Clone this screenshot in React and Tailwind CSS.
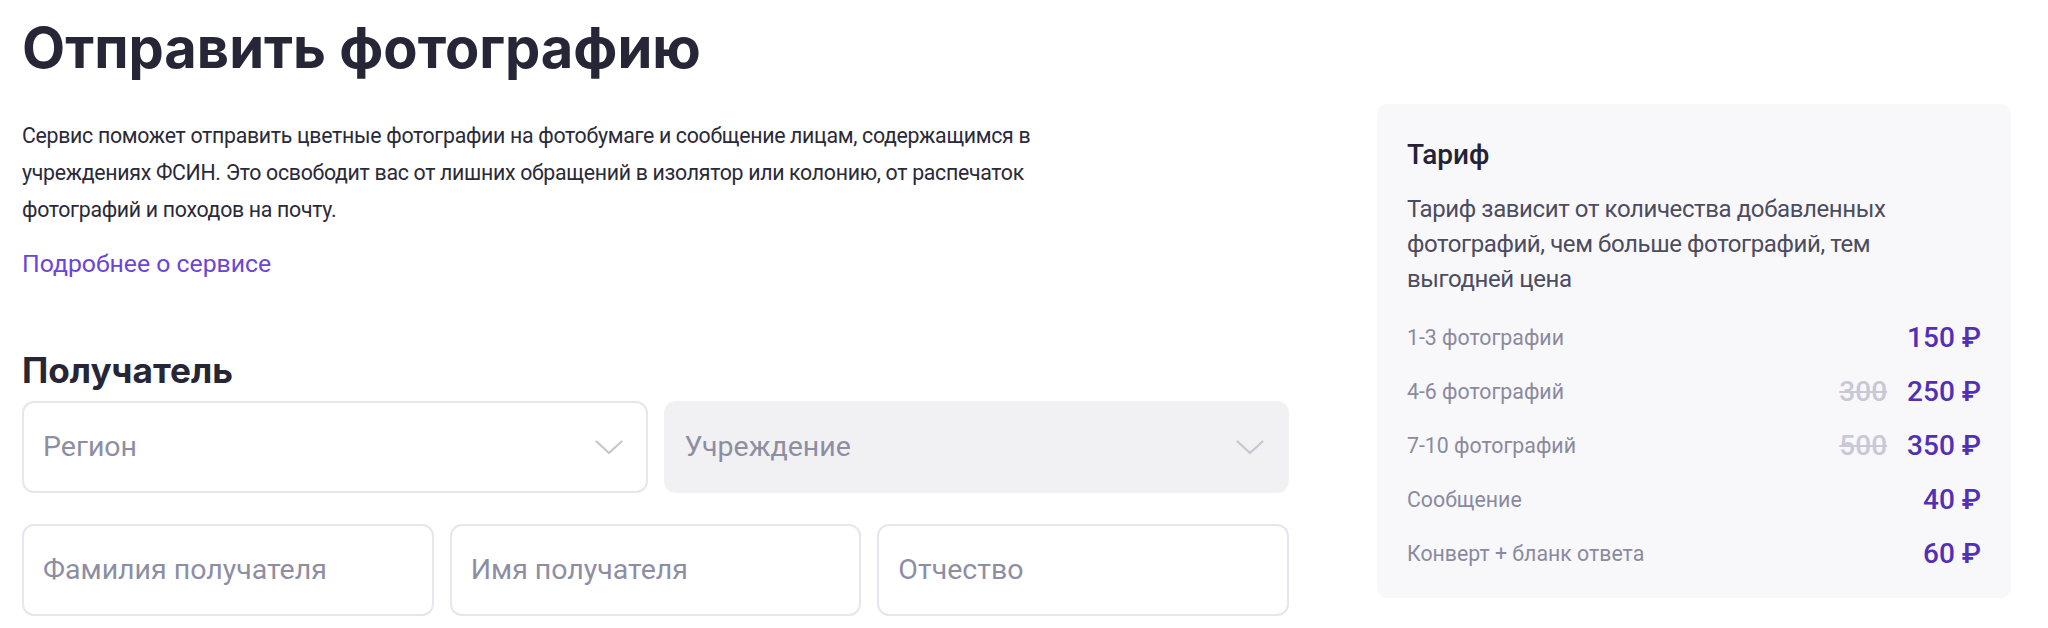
import React from 'react';

const Chevron = () => (
  <svg width="28" height="15" viewBox="0 0 28 15" fill="none" className="shrink-0">
    <path d="M1.5 1.5 L14 13 L26.5 1.5" stroke="#c6c6d4" strokeWidth="2.2" strokeLinecap="round" strokeLinejoin="round" />
  </svg>
);

const SelectBox = ({ label, disabled }) => (
  <div
    className={
      disabled
        ? 'flex-1 h-[92px] rounded-[12px] bg-[#f1f1f4] flex items-center justify-between pl-[21px] pr-[25px]'
        : 'flex-1 h-[92px] rounded-[12px] border-2 border-[#e6e6ec] bg-white flex items-center justify-between pl-[19px] pr-[23px]'
    }
  >
    <span className="text-[28.5px] text-[#8e8ea2]">{label}</span>
    <Chevron />
  </div>
);

const TextBox = ({ label }) => (
  <div className="flex-1 h-[92px] rounded-[12px] border-2 border-[#e6e6ec] bg-white flex items-center pl-[19px]">
    <span className="text-[28.5px] text-[#8e8ea2]">{label}</span>
  </div>
);

const prices = [
  { label: '1-3 фотографии', price: '150 ₽' },
  { label: '4-6 фотографий', old: '300', price: '250 ₽' },
  { label: '7-10 фотографий', old: '500', price: '350 ₽' },
  { label: 'Сообщение', price: '40 ₽' },
  { label: 'Конверт + бланк ответа', price: '60 ₽' },
];

const App = () => {
  return (
    <div className="bg-white min-h-[628px] flex gap-[88px] px-[22px] font-['Roboto',sans-serif]">
      <div className="w-[1267px] shrink-0">
        <h1 className="pt-[15px] text-[56px] leading-[67px] font-bold text-[#262637] font-['Inter',sans-serif]">
          Отправить фотографию
        </h1>

        <p className="mt-[35px] max-w-[1060px] text-[21.3px] leading-[37px] tracking-[-0.3px] text-[#2a2a38]">
          Сервис поможет отправить цветные фотографии на фотобумаге и сообщение лицам, содержащимся в
          учреждениях ФСИН. Это освободит вас от лишних обращений в изолятор или колонию, от распечаток
          фотографий и походов на почту.
        </p>

        <a className="block mt-[17px] text-[24.8px] leading-[37px] text-[#6a46d6]">
          Подробнее о сервисе
        </a>

        <h2 className="mt-[66px] text-[35.2px] leading-[44px] font-bold text-[#262637] font-['Inter',sans-serif]">
          Получатель
        </h2>

        <div className="mt-[9px] flex gap-4">
          <SelectBox label="Регион" />
          <SelectBox label="Учреждение" disabled />
        </div>

        <div className="mt-[31px] flex gap-4">
          <TextBox label="Фамилия получателя" />
          <TextBox label="Имя получателя" />
          <TextBox label="Отчество" />
        </div>
      </div>

      <div className="w-[634px] shrink-0 mt-[104px] self-start rounded-[10px] bg-[#f8f8fb] pt-[33px] pb-[17px] px-[30px]">
        <h3 className="text-[28px] leading-[36px] font-medium text-[#232333]">Тариф</h3>
        <p className="mt-[19px] max-w-[510px] text-[24px] leading-[35px] tracking-[-0.4px] text-[#4c4c5e]">
          Тариф зависит от количества добавленных фотографий, чем больше фотографий, тем выгодней цена
        </p>
        <div className="mt-[14px] flex flex-col">
          {prices.map((p) => (
            <div key={p.label} className="h-[54px] flex items-center justify-between">
              <span className="text-[21.3px] text-[#8a8a9e]">{p.label}</span>
              <div className="flex items-center gap-[20px]">
                {p.old && (
                  <span className="text-[28px] font-medium text-[#c8c8d6] line-through decoration-2">{p.old}</span>
                )}
                <span className="text-[28px] font-medium text-[#5130b6]">{p.price}</span>
              </div>
            </div>
          ))}
        </div>
      </div>
    </div>
  );
};

export default App;
